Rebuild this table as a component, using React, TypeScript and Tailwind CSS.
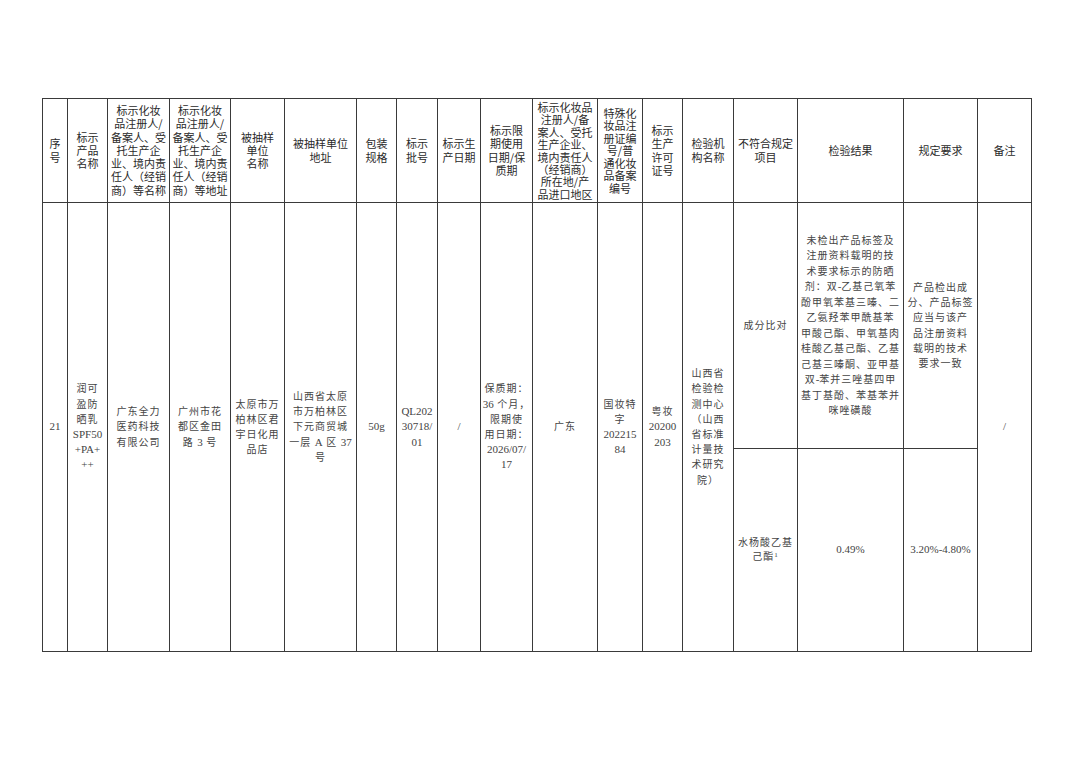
const headers: string[][] = [
  ['序', '号'],
  ['标示', '产品', '名称'],
  ['标示化妆', '品注册人/', '备案人、受', '托生产企', '业、境内责', '任人（经销', '商）等名称'],
  ['标示化妆', '品注册人/', '备案人、受', '托生产企', '业、境内责', '任人（经销', '商）等地址'],
  ['被抽样', '单位', '名称'],
  ['被抽样单位', '地址'],
  ['包装', '规格'],
  ['标示', '批号'],
  ['标示生', '产日期'],
  ['标示限', '期使用', '日期/保', '质期'],
  ['标示化妆品', '注册人/备', '案人、受托', '生产企业、', '境内责任人', '（经销商）', '所在地/产', '品进口地区'],
  ['特殊化', '妆品注', '册证编', '号/普', '通化妆', '品备案', '编号'],
  ['标示', '生产', '许可', '证号'],
  ['检验机', '构名称'],
  ['不符合规定', '项目'],
  ['检验结果'],
  ['规定要求'],
  ['备注'],
]

const body: string[][] = [
  ['21'],
  ['润可', '盈防', '晒乳', 'SPF50', '+PA+', '++'],
  ['广东全力', '医药科技', '有限公司'],
  ['广州市花', '都区金田', '路 3 号'],
  ['太原市万', '柏林区君', '宇日化用', '品店'],
  ['山西省太原', '市万柏林区', '下元商贸城', '一层 A 区 37', '号'],
  ['50g'],
  ['QL202', '30718/', '01'],
  ['/'],
  ['保质期：', '36 个月，', '限期使', '用日期：', '2026/07/', '17'],
  ['广东'],
  ['国妆特', '字', '202215', '84'],
  ['粤妆', '20200', '203'],
  ['山西省', '检验检', '测中心', '（山西', '省标准', '计量技', '术研究', '院）'],
]

const result = [
  '未检出产品标签及',
  '注册资料载明的技',
  '术要求标示的防晒',
  '剂：双-乙基己氧苯',
  '酚甲氧苯基三嗪、二',
  '乙氨羟苯甲酰基苯',
  '甲酸己酯、甲氧基肉',
  '桂酸乙基己酯、乙基',
  '己基三嗪酮、亚甲基',
  '双-苯并三唑基四甲',
  '基丁基酚、苯基苯并',
  '咪唑磺酸',
]

const rule = ['产品检出成', '分、产品标签', '应当与该产', '品注册资料', '载明的技术', '要求一致']

const sans = { fontFamily: '"Noto Sans CJK SC", "Noto Sans", sans-serif' }
const serif = { fontFamily: '"Liberation Serif", "Noto Sans CJK SC", serif' }

// latin runs in the body are set in Times at 11px, cjk at 10px with spacing
function Txt({ text }: { text: string }) {
  const parts = text.split(/([\x21-\x7E]+)/)
  return (
    <>
      {parts.map((p, i) =>
        /[\x21-\x7E]/.test(p) ? (
          <span key={i} className="text-[11px] tracking-normal">{p}</span>
        ) : (
          <span key={i}>{p}</span>
        )
      )}
    </>
  )
}

function Lines({ lines, tight }: { lines: string[]; tight?: boolean }) {
  return (
    <div className={tight ? 'leading-[12.4px]' : 'leading-[13.2px]'}>
      {lines.map((l, i) => (
        <div key={i} className="whitespace-nowrap">{l}</div>
      ))}
    </div>
  )
}

function BodyLines({ lines, lh = 'leading-[15.2px]' }: { lines: string[]; lh?: string }) {
  return (
    <div className={lh}>
      {lines.map((l, i) => (
        <div key={i} className="whitespace-nowrap">
          <Txt text={l} />
        </div>
      ))}
    </div>
  )
}

const cell = 'bg-white flex items-center justify-center text-center text-[10px] tracking-[1px] text-[#444] overflow-hidden'

export default function App() {
  return (
    <div className="min-h-[764px] bg-white pt-[98px] pl-[42px]">
      <div className="inline-grid grid-cols-[24px_39px_61px_60px_53px_71px_39px_40px_42px_51px_64px_44px_39px_50px_63px_105px_73px_53px] grid-rows-[103px_245px_202px] gap-px p-px bg-[#3a3a3a]">
        {headers.map((h, i) => (
          <div
            key={'h' + i}
            style={sans}
            className="bg-white flex items-center justify-center text-center text-[11px] text-[#2a2a2a] overflow-hidden"
          >
            <Lines lines={h} tight={i === 10 || i === 11} />
          </div>
        ))}

        {body.map((b, i) => (
          <div key={'b' + i} style={serif} className={'row-span-2 ' + cell}>
            <BodyLines lines={b} />
          </div>
        ))}

        <div style={serif} className={cell}>
          <BodyLines lines={['成分比对']} />
        </div>
        <div style={serif} className={cell + ' tracking-[0.8px]'}>
          <BodyLines lines={result} lh="leading-[15.5px]" />
        </div>
        <div style={serif} className={cell}>
          <BodyLines lines={rule} />
        </div>
        <div style={serif} className={'row-span-2 ' + cell}>
          <BodyLines lines={['/']} />
        </div>

        <div style={serif} className={cell}>
          <div className="leading-[14px]">
            <div className="whitespace-nowrap">水杨酸乙基</div>
            <div className="whitespace-nowrap">
              己酯<sup className="text-[7px]">1</sup>
            </div>
          </div>
        </div>
        <div style={serif} className={cell}>
          <BodyLines lines={['0.49%']} />
        </div>
        <div style={serif} className={cell}>
          <BodyLines lines={['3.20%-4.80%']} />
        </div>
      </div>
    </div>
  )
}
